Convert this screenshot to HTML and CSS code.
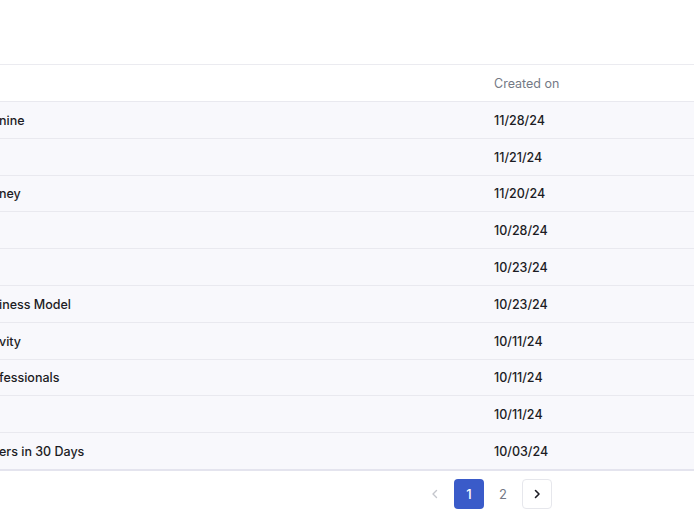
FILE: index.html
```html
<!DOCTYPE html>
<html lang="en">
<head>
<meta charset="utf-8">
<link rel="stylesheet" href="styles.css">
</head>
<body>
<div class="page">
  <div class="topbar"></div>
  <div class="table">
    <div class="row head">
      <div class="c-title"></div>
      <div class="c-date">Created on</div>
    </div>
    <div class="row"><div class="c-title">nine</div><div class="c-date">11/28/24</div></div>
    <div class="row"><div class="c-title"></div><div class="c-date">11/21/24</div></div>
    <div class="row"><div class="c-title">ney</div><div class="c-date">11/20/24</div></div>
    <div class="row"><div class="c-title"></div><div class="c-date">10/28/24</div></div>
    <div class="row"><div class="c-title"></div><div class="c-date">10/23/24</div></div>
    <div class="row"><div class="c-title">iness Model</div><div class="c-date">10/23/24</div></div>
    <div class="row"><div class="c-title">vity</div><div class="c-date">10/11/24</div></div>
    <div class="row"><div class="c-title">fessionals</div><div class="c-date">10/11/24</div></div>
    <div class="row"><div class="c-title"></div><div class="c-date">10/11/24</div></div>
    <div class="row last"><div class="c-title">ers in 30 Days</div><div class="c-date">10/03/24</div></div>
  </div>
  <div class="pager">
    <button class="pg prev" aria-label="Previous">
      <svg width="12" height="12" viewBox="0 0 12 12"><path d="M7.5 2.5 4 6l3.5 3.5" fill="none" stroke="currentColor" stroke-width="1.4" stroke-linecap="round" stroke-linejoin="round"/></svg>
    </button>
    <button class="pg active">1</button>
    <button class="pg">2</button>
    <button class="pg next" aria-label="Next">
      <svg width="12" height="12" viewBox="0 0 12 12"><path d="M4.5 2.5 8 6 4.5 9.5" fill="none" stroke="currentColor" stroke-width="1.6" stroke-linecap="round" stroke-linejoin="round"/></svg>
    </button>
  </div>
</div>
</body>
</html>
```
FILE: styles.css
```css
* { box-sizing: border-box; }
html, body { margin: 0; padding: 0; background: #fff; }
body {
  font-family: Inter, "Noto Sans", "Liberation Sans", sans-serif;
  font-size: 12.5px;
  color: #1c1c24;
  overflow: hidden;
}
.page { width: 694px; height: 522px; }
.topbar { height: 64px; }
.table { border-top: 1px solid #ebebf0; }
.row {
  display: flex;
  align-items: center;
  height: 36.8px;
  padding-top: 1px;
  background: #f8f8fc;
  border-top: 1px solid #e9e9ef;
  font-weight: 500;
}
.row.head {
  height: 36px;
  border-top: none;
  background: #fff;
  color: #747985;
  font-weight: 400;
}
.row.last { border-bottom: 2px solid #e4e4ee; height: 38.8px; }
.c-title { width: 495px; margin-left: -1px; white-space: nowrap; overflow: hidden; }
.c-date { flex: 1; }
.pager {
  display: flex;
  justify-content: flex-end;
  gap: 4px;
  padding: 8px 142px 0 0;
}
.pg {
  width: 30px;
  height: 30px;
  border: 1px solid transparent;
  border-radius: 4px;
  background: transparent;
  font-family: inherit;
  font-size: 13px;
  color: #747985;
  display: flex;
  align-items: center;
  justify-content: center;
  padding: 0;
}
.pg.prev { color: #c4c6cc; }
.pg.active { background: #3a5bc9; color: #fff; font-weight: 500; }
.pg.next { border-color: #e6e7ec; color: #1c1c24; background: #fff; }
```
